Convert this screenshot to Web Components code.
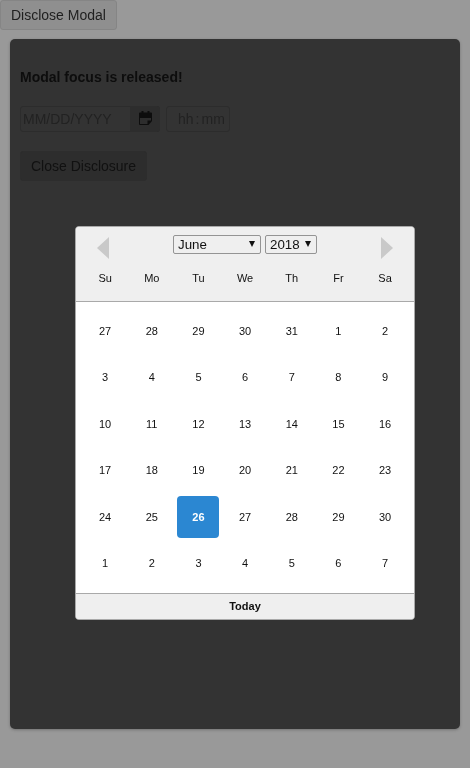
<!DOCTYPE html>
<html lang="en">
<head>
<meta charset="UTF-8">
<title>Modal</title>
<style>
  html, body { margin: 0; height: 100%; }
  body { background: #999; font-family: "Liberation Sans", Arial, sans-serif; }
</style>
</head>
<body>
<template id="tmpl-button">
  <style>
    :host { display: inline-block; will-change: transform; }
    button {
      display: block;
      font: 14px/18px "Liberation Sans", Arial, sans-serif;
      color: var(--btn-color, #1f1f1f);
      background: var(--btn-bg, #8f8f8f);
      border: 1px solid var(--btn-border, #858585);
      border-radius: 3px;
      padding: 5px 10px;
      height: 30px;
      margin: 0;
    }
  </style>
  <button type="button"><slot></slot></button>
</template>

<template id="tmpl-date">
  <style>
    :host { display: flex; gap: 6px; height: 26px; font-size: 14px; will-change: transform; }
    .date { display: flex; width: 140px; height: 26px; border-radius: 3px; border: 1px solid #2c2c2c; box-sizing: border-box; }
    .date span { flex: 1; padding-left: 2px; line-height: 24px; color: #222; }
    .cal { width: 30px; margin: -1px; height: 26px; background: #2d2d2d; border-radius: 0 3px 3px 0; display: flex; align-items: center; justify-content: center; }
    .cal svg { margin-bottom: 2px; }
    .time { width: 64px; height: 26px; box-sizing: border-box; border: 1px solid #2c2c2c; border-radius: 3px; display: flex; line-height: 24px; color: #222; padding-left: 11px; }
    .time i { font-style: normal; padding: 0 2px; font-size: 14px; }
  </style>
  <div class="date">
    <span>MM/DD/YYYY</span>
    <div class="cal">
      <svg width="13" height="14" viewBox="0 0 13 14">
        <path fill="#0d0d0d" d="M2.500 0h2v1.500h4V0h2v1.500H12a1 1 0 0 1 1 1V10l-3.500 4H1a1 1 0 0 1-1-1V2.500a1 1 0 0 1 1-1h1.500z"/>
        <path fill="#2d2d2d" d="M1 7h11v2.500H8.500V13H1z"/>
      </svg>
    </div>
  </div>
  <div class="time">hh<i>:</i>mm</div>
</template>

<template id="tmpl-select">
  <style>
    :host { display: block; box-sizing: border-box; height: 19px; border: 1px solid #949494; border-radius: 2px; background: #efefef; font-size: 13.33px; line-height: 17px; color: #111; position: relative; padding-left: 4px; }
    i { position: absolute; right: 5px; top: 5px; width: 0; height: 0; border: 3.5px solid transparent; border-top: 6px solid #111; border-bottom: 0; }
  </style>
  <slot></slot><i></i>
</template>

<template id="tmpl-calendar">
  <style>
    :host {
      position: absolute; left: 65px; top: 187px;
      width: 340px; height: 394px; box-sizing: border-box;
      background: #fff; border: 1px solid #a9a9a9; border-radius: 4px; overflow: hidden;
      display: flex; flex-direction: column; will-change: transform;
      font-family: "Liberation Sans", Arial, sans-serif; color: #111;
    }
    header { height: 75px; box-sizing: border-box; background: #efefef; border-bottom: 1px solid #a9a9a9; padding: 8px 5.5px 0; }
    .nav { display: flex; justify-content: center; gap: 4px; position: relative; }
    cal-select.m { width: 88px; }
    cal-select.y { width: 52px; }
    .arrow { position: absolute; top: 2px; width: 0; height: 0; border: 11.5px solid transparent; }
    .prev { left: 15px; border-left: 0; border-right: 12px solid #c9c9c9; }
    .next { right: 16px; border-right: 0; border-left: 12px solid #c9c9c9; }
    .heads { display: grid; grid-template-columns: repeat(7, 46.67px); margin-top: 17px; font-size: 11px; line-height: 14px; text-align: center; padding-left: .3px; }
    .days { flex: 1; display: grid; grid-template-columns: repeat(7, 46.67px); grid-auto-rows: 46.4px; padding: 5.85px 5.5px 0 5.8px; font-size: 11px; text-align: center; align-items: center; justify-items: center; }
    .days span { width: 42px; height: 42px; line-height: 42px; border-radius: 4px; }
    .days .sel { background: #2b87d2; color: #fff; font-weight: bold; }
    footer { height: 26px; box-sizing: border-box; background: #efefef; border-top: 1px solid #a9a9a9; font-size: 11px; font-weight: bold; line-height: 25px; text-align: center; }
  </style>
  <header>
    <div class="nav">
      <div class="arrow prev"></div>
      <cal-select class="m">June</cal-select>
      <cal-select class="y">2018</cal-select>
      <div class="arrow next"></div>
    </div>
    <div class="heads"><span>Su</span><span>Mo</span><span>Tu</span><span>We</span><span>Th</span><span>Fr</span><span>Sa</span></div>
  </header>
  <div class="days"></div>
  <footer>Today</footer>
</template>

<template id="tmpl-modal">
  <style>
    :host {
      display: block; position: relative; box-sizing: border-box;
      margin: 9px 10px 0; height: 690px;
      background: #333; border-radius: 5px; padding: 28px 10px 0;
      box-shadow: 0 1px 3px rgba(0,0,0,.25);
      --btn-bg: #2d2d2d; --btn-border: #2d2d2d; --btn-color: #111;
    }
    p { margin: 0 0 19px; font-size: 14px; font-weight: bold; line-height: 20px; color: #0d0d0d; will-change: transform; }
    date-field { margin-bottom: 19px; }
  </style>
  <p>Modal focus is released!</p>
  <date-field></date-field>
  <modal-button>Close Disclosure</modal-button>
  <cal-popup></cal-popup>
</template>

<modal-button>Disclose Modal</modal-button>
<modal-box></modal-box>

<script>
  function shadowFrom(el, id) {
    const shadow = el.attachShadow({mode: 'open'})
    shadow.append(document.getElementById(id).content.cloneNode(true))
    return shadow
  }

  customElements.define('modal-button', class extends HTMLElement {
    connectedCallback() { if (!this.shadowRoot) shadowFrom(this, 'tmpl-button') }
  })
  customElements.define('date-field', class extends HTMLElement {
    connectedCallback() { if (!this.shadowRoot) shadowFrom(this, 'tmpl-date') }
  })
  customElements.define('cal-select', class extends HTMLElement {
    connectedCallback() { if (!this.shadowRoot) shadowFrom(this, 'tmpl-select') }
  })
  customElements.define('cal-popup', class extends HTMLElement {
    connectedCallback() {
      if (this.shadowRoot) return
      const shadow = shadowFrom(this, 'tmpl-calendar')
      const days = [27,28,29,30,31,1,2, 3,4,5,6,7,8,9, 10,11,12,13,14,15,16, 17,18,19,20,21,22,23, 24,25,26,27,28,29,30, 1,2,3,4,5,6,7]
      const grid = shadow.querySelector('.days')
      days.forEach((d, i) => {
        const cell = document.createElement('span')
        cell.textContent = d
        if (i === 30) cell.className = 'sel'
        grid.append(cell)
      })
    }
  })
  customElements.define('modal-box', class extends HTMLElement {
    connectedCallback() { if (!this.shadowRoot) shadowFrom(this, 'tmpl-modal') }
  })
</script>
</body>
</html>
